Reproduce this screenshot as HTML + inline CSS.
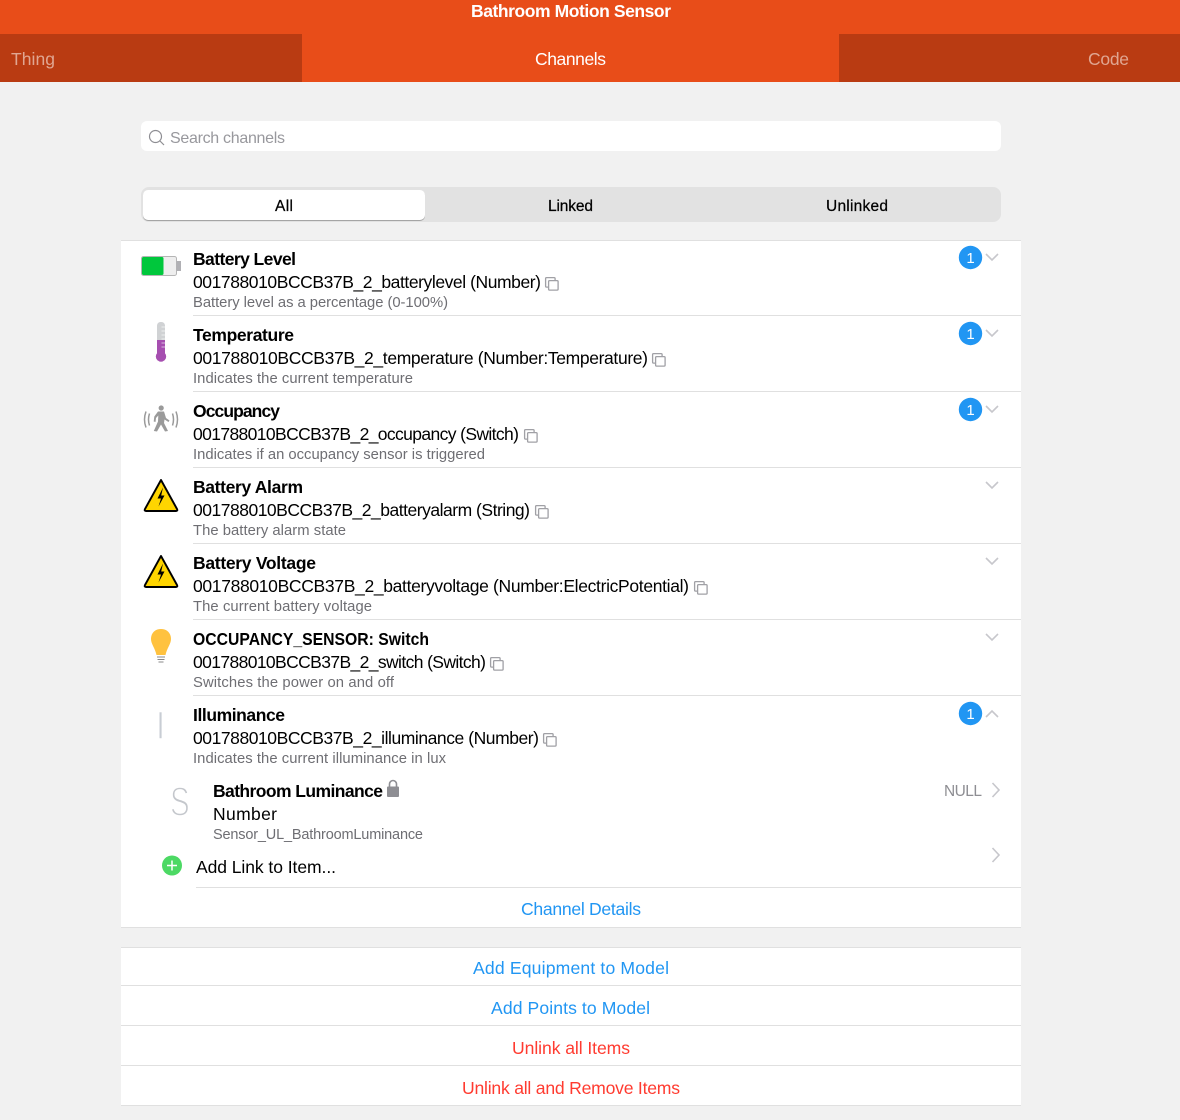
<!DOCTYPE html>
<html><head><meta charset="utf-8"><title>Bathroom Motion Sensor</title>
<style>
html,body{margin:0;padding:0;background:#f1f1f1;width:1180px;height:1120px;overflow:hidden}
svg{display:block;font-family:"Liberation Sans",sans-serif}
.t{font-size:17.5px;font-weight:bold;fill:#000}
.s{font-size:17.5px;fill:#000}
.d{font-size:14.8px;fill:#6e6e73}
.l{font-size:17.6px;fill:#2196f3}
.r{font-size:17.6px;fill:#ff3b30}
.tab{font-size:17.5px}
.seg{font-size:15.5px;fill:#000;stroke:#000;stroke-width:.25}
.ln{fill:#e0e0e0}
.ch{fill:none;stroke:#c7c7cc;stroke-width:1.6}
.cp{fill:#fff;stroke:#a0a0a5;stroke-width:1.3}
</style></head><body>
<svg width="1180" height="1120" viewBox="0 0 1180 1120" xmlns="http://www.w3.org/2000/svg">
<defs>
<g id="warn">
<path d="M161 1.5 L177 30.5 Q178 32.5 176 32.5 L146 32.5 Q144 32.5 145 30.5 Z" fill="#ffd500" stroke="#000" stroke-width="1.9" stroke-linejoin="round"/>
<path d="M163 9 L157.500 20 L161 20 L158.500 28 L164.500 17 L161.200 17 Z" fill="#000"/>
</g>
<g id="copy">
<rect x="0.6" y="0.6" width="9.5" height="9.5" rx="1" class="cp"/>
<rect x="3.6" y="3.6" width="9.5" height="9.5" rx="1" class="cp"/>
</g>
<g id="badge">
<circle cx="0" cy="0" r="11.7" fill="#2196f3"/>
</g>
</defs>

<!-- header -->
<rect x="0" y="0" width="1180" height="82" fill="#e84d19"/>
<rect x="0" y="34" width="302" height="48" fill="#b93b12"/>
<rect x="839" y="34" width="341" height="48" fill="#b93b12"/>
<text x="471" y="17" font-size="17.5" font-weight="bold" fill="#fff" textLength="200">Bathroom Motion Sensor</text>
<text class="tab" x="11" y="65" fill="#e0a692" textLength="44">Thing</text>
<text class="tab" x="535" y="65" fill="#fff" textLength="71">Channels</text>
<text class="tab" x="1088" y="65" fill="#e0a692" textLength="41">Code</text>

<!-- search -->
<rect x="141" y="121" width="860" height="30" rx="6" fill="#fff"/>
<circle cx="155.5" cy="136.5" r="6" fill="none" stroke="#8e8e93" stroke-width="1.2"/>
<path d="M160 141 L164 145" stroke="#8e8e93" stroke-width="1.2"/>
<text x="170" y="143" font-size="16" fill="#98989d" textLength="115">Search channels</text>

<!-- segmented -->
<rect x="141" y="187" width="860" height="35" rx="8" fill="#e2e2e2"/>
<rect x="143" y="190.5" width="282" height="30.500" rx="5" fill="#a5a5a5"/>
<rect x="143" y="190" width="282" height="30" rx="5" fill="#fff"/>
<text class="seg" x="275" y="211" textLength="18">All</text>
<text class="seg" x="548" y="211" textLength="45">Linked</text>
<text class="seg" x="826" y="211" textLength="62">Unlinked</text>

<!-- card -->
<rect x="121" y="240" width="900" height="688" fill="#fff"/>
<rect x="121" y="240" width="900" height="1" class="ln"/>
<rect x="193" y="315" width="828" height="1" class="ln"/>
<rect x="193" y="391" width="828" height="1" class="ln"/>
<rect x="193" y="467" width="828" height="1" class="ln"/>
<rect x="193" y="543" width="828" height="1" class="ln"/>
<rect x="193" y="619" width="828" height="1" class="ln"/>
<rect x="193" y="695" width="828" height="1" class="ln"/>
<rect x="196" y="887" width="825" height="1" class="ln"/>
<rect x="121" y="927" width="900" height="1" class="ln"/>

<!-- row 1 -->
<rect x="141.5" y="256.5" width="35" height="19" rx="2" fill="#eeeeee" stroke="#b5b5b5"/>
<rect x="142" y="257" width="21.5" height="18" rx="1.5" fill="#00c73c"/>
<rect x="176.5" y="261" width="4.5" height="10" fill="#b0b0b4"/>
<text class="t" x="193" y="265" textLength="103">Battery Level</text>
<text class="s" x="193" y="288" textLength="348">001788010BCCB37B_2_batterylevel (Number)</text>
<text class="d" x="193" y="307" textLength="255">Battery level as a percentage (0-100%)</text>
<use href="#copy" x="545" y="277"/>
<use href="#badge" x="970.5" y="257.5"/>
<text x="970.5" y="263" font-size="15" fill="#fff" text-anchor="middle">1</text>
<path class="ch" d="M986 254 L992 260 L998 254"/>

<!-- row 2 -->
<rect x="157" y="322" width="8" height="22" rx="3.5" fill="#d0d2d4"/>
<rect x="157" y="340" width="8" height="14" fill="#a64fb0"/>
<circle cx="161" cy="356.5" r="5.2" fill="#a64fb0"/>
<path d="M161.5 327H165M161.5 331H165M161.5 335H165M161.5 339H165M161.5 343H165M161.5 347H165" stroke="#fff" stroke-width=".8" opacity=".8"/>
<text class="t" x="193" y="341" textLength="101">Temperature</text>
<text class="s" x="193" y="364" textLength="455">001788010BCCB37B_2_temperature (Number:Temperature)</text>
<text class="d" x="193" y="383" textLength="220">Indicates the current temperature</text>
<use href="#copy" x="652" y="353"/>
<use href="#badge" x="970.5" y="333.5"/>
<text x="970.5" y="339" font-size="15" fill="#fff" text-anchor="middle">1</text>
<path class="ch" d="M986 330 L992 336 L998 330"/>

<!-- row 3 -->
<g fill="#9a9a9a">
<circle cx="161.2" cy="408" r="2.6"/>
<path d="M158 411.5 L164 411.5 L166 418 L169.5 420.5 L168.5 422 L164.5 419.5 L164 423 L168 431 L165 431.5 L161 424.5 L157 431.5 L153.8 431 L158 421.5 L158.3 415.5 L156 418 L155.5 422 L153.7 421.5 L154.3 416.5 Z"/>
</g>
<g fill="none" stroke="#9a9a9a" stroke-width="1.5">
<path d="M149.500 413.500 Q147.500 419.500 149.500 425.500"/>
<path d="M146 411.500 Q143 419.500 146 427.500"/>
<path d="M172.500 413.500 Q174.500 419.500 172.500 425.500"/>
<path d="M176 411.500 Q179 419.500 176 427.500"/>
</g>
<text class="t" x="193" y="417" textLength="87">Occupancy</text>
<text class="s" x="193" y="440" textLength="326">001788010BCCB37B_2_occupancy (Switch)</text>
<text class="d" x="193" y="459" textLength="292">Indicates if an occupancy sensor is triggered</text>
<use href="#copy" x="524" y="429"/>
<use href="#badge" x="970.5" y="409.5"/>
<text x="970.5" y="415" font-size="15" fill="#fff" text-anchor="middle">1</text>
<path class="ch" d="M986 406 L992 412 L998 406"/>

<!-- row 4 -->
<use href="#warn" x="0" y="478.5"/>
<text class="t" x="193" y="493" textLength="110">Battery Alarm</text>
<text class="s" x="193" y="516" textLength="337">001788010BCCB37B_2_batteryalarm (String)</text>
<text class="d" x="193" y="535" textLength="153">The battery alarm state</text>
<use href="#copy" x="535" y="505"/>
<path class="ch" d="M986 482 L992 488 L998 482"/>

<!-- row 5 -->
<use href="#warn" x="0" y="554.5"/>
<text class="t" x="193" y="569" textLength="123">Battery Voltage</text>
<text class="s" x="193" y="592" textLength="496">001788010BCCB37B_2_batteryvoltage (Number:ElectricPotential)</text>
<text class="d" x="193" y="611" textLength="179">The current battery voltage</text>
<use href="#copy" x="694" y="581"/>
<path class="ch" d="M986 558 L992 564 L998 558"/>

<!-- row 6 -->
<path d="M161 629 C154.5 629 151 633.5 151 639 C151 644 155 648 156.5 655 L165.5 655 C167 648 171 644 171 639 C171 633.5 167.5 629 161 629 Z" fill="#ffc23f"/>
<path d="M157 657H165M157.5 659.5H164.500M158.500 662H163.500" stroke="#888" stroke-width="1.1"/>
<text x="193" y="645" font-size="17.500" font-weight="bold" textLength="236" lengthAdjust="spacingAndGlyphs">OCCUPANCY_SENSOR: Switch</text>
<text class="s" x="193" y="668" textLength="293">001788010BCCB37B_2_switch (Switch)</text>
<text class="d" x="193" y="687" textLength="201">Switches the power on and off</text>
<use href="#copy" x="490" y="657"/>
<path class="ch" d="M986 634 L992 640 L998 634"/>

<!-- row 7 -->
<text x="160.500" y="739" font-size="40" fill="#c8cdd4" stroke="#fff" stroke-width="1.6" text-anchor="middle">I</text>
<text class="t" x="193" y="721" textLength="92">Illuminance</text>
<text class="s" x="193" y="744" textLength="346">001788010BCCB37B_2_illuminance (Number)</text>
<text class="d" x="193" y="763" textLength="253">Indicates the current illuminance in lux</text>
<use href="#copy" x="543" y="733"/>
<use href="#badge" x="970.5" y="713.5"/>
<text x="970.5" y="719" font-size="15" fill="#fff" text-anchor="middle">1</text>
<path class="ch" d="M986 717 L992 711 L998 717"/>

<!-- item -->
<text transform="translate(170 815.500) scale(.72 1)" font-size="41" fill="#c4c7cc" stroke="#fff" stroke-width="1.500">S</text>
<text class="t" x="213" y="797" textLength="170">Bathroom Luminance</text>
<path d="M389.500 787 V784 a3.500 3.500 0 0 1 7 0 V787" fill="none" stroke="#8e8e93" stroke-width="1.6"/>
<rect x="387" y="786.500" width="12" height="10.500" rx="1" fill="#8e8e93"/>
<text class="s" x="213" y="820" textLength="64">Number</text>
<text x="213" y="839" font-size="14.500" fill="#6e6e73" textLength="210">Sensor_UL_BathroomLuminance</text>
<text x="944" y="796" font-size="15.500" fill="#8e8e93" textLength="38">NULL</text>
<path class="ch" d="M992.500 783 L999 790 L992.500 797"/>

<!-- add link -->
<circle cx="172" cy="865.500" r="10" fill="#4cd964"/>
<path d="M167 865.500H177M172 860.500V870.500" stroke="#fff" stroke-width="1.500"/>
<text class="s" x="196" y="873" textLength="140">Add Link to Item...</text>
<path class="ch" d="M992.500 848 L999 855 L992.500 862"/>
<text class="l" x="521" y="915" textLength="120">Channel Details</text>

<!-- actions -->
<rect x="121" y="947" width="900" height="159" fill="#fff"/>
<rect x="121" y="947" width="900" height="1" class="ln"/>
<rect x="121" y="985" width="900" height="1" class="ln"/>
<rect x="121" y="1025" width="900" height="1" class="ln"/>
<rect x="121" y="1065" width="900" height="1" class="ln"/>
<rect x="121" y="1105" width="900" height="1" class="ln"/>
<text class="l" x="473" y="974" textLength="196">Add Equipment to Model</text>
<text class="l" x="491" y="1014" textLength="159">Add Points to Model</text>
<text class="r" x="512" y="1054" textLength="118">Unlink all Items</text>
<text class="r" x="462" y="1094" textLength="218">Unlink all and Remove Items</text>
</svg>
</body></html>
